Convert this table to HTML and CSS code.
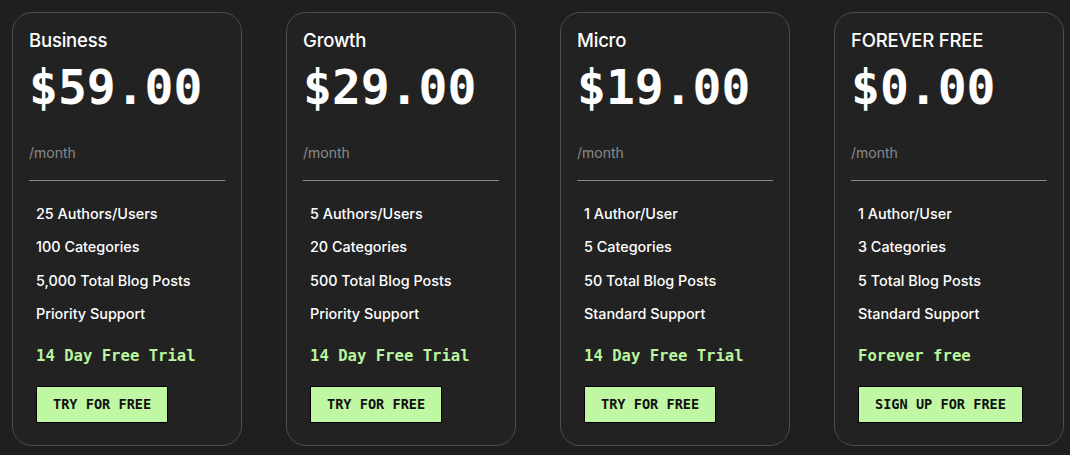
FILE: index.html
```html
<!DOCTYPE html>
<html>
<head>
<meta charset="utf-8">
<link rel="stylesheet" href="styles.css">
</head>
<body>
<div class="plans">
  <div class="card">
    <div class="name">Business</div>
    <div class="price">$59.00</div>
    <div class="period">/month</div>
    <ul class="features">
      <li>25 Authors/Users</li>
      <li>100 Categories</li>
      <li>5,000 Total Blog Posts</li>
      <li>Priority Support</li>
    </ul>
    <div class="trial">14 Day Free Trial</div>
    <a class="btn">TRY FOR FREE</a>
  </div>
  <div class="card">
    <div class="name">Growth</div>
    <div class="price">$29.00</div>
    <div class="period">/month</div>
    <ul class="features">
      <li>5 Authors/Users</li>
      <li>20 Categories</li>
      <li>500 Total Blog Posts</li>
      <li>Priority Support</li>
    </ul>
    <div class="trial">14 Day Free Trial</div>
    <a class="btn">TRY FOR FREE</a>
  </div>
  <div class="card">
    <div class="name">Micro</div>
    <div class="price">$19.00</div>
    <div class="period">/month</div>
    <ul class="features">
      <li>1 Author/User</li>
      <li>5 Categories</li>
      <li>50 Total Blog Posts</li>
      <li>Standard Support</li>
    </ul>
    <div class="trial">14 Day Free Trial</div>
    <a class="btn">TRY FOR FREE</a>
  </div>
  <div class="card">
    <div class="name">FOREVER FREE</div>
    <div class="price">$0.00</div>
    <div class="period">/month</div>
    <ul class="features">
      <li>1 Author/User</li>
      <li>3 Categories</li>
      <li>5 Total Blog Posts</li>
      <li>Standard Support</li>
    </ul>
    <div class="trial">Forever free</div>
    <a class="btn">SIGN UP FOR FREE</a>
  </div>
</div>
</body>
</html>
```
FILE: styles.css
```css
html, body {
  margin: 0;
  padding: 0;
  background: #1f1f1f;
}
body {
  font-family: Inter, "Noto Sans", sans-serif;
  color: #fff;
}
.plans {
  display: flex;
  gap: 44px;
  padding: 12px 6px 0 12px;
}
.card {
  box-sizing: border-box;
  width: 230px;
  height: 434px;
  border: 1.5px solid #4d4d4d;
  border-radius: 20px;
  background: #222;
  padding: 15px 16px 0 16px;
  display: flex;
  flex-direction: column;
  align-items: flex-start;
}
.name {
  font-size: 18.5px;
  font-weight: 500;
  line-height: 24px;
  letter-spacing: -0.2px;
}
.price {
  font-family: "DejaVu Sans Mono", monospace;
  font-weight: bold;
  font-size: 48px;
  line-height: 52px;
  margin-top: 9px;
  letter-spacing: 0;
}
.period {
  font-size: 14px;
  color: #8a8a8a;
  line-height: 18px;
  margin-top: 31px;
}
.features {
  list-style: none;
  margin: 18px 0 0 0;
  padding: 23px 0 0 7px;
  border-top: 1px solid #8a8a8a;
  align-self: stretch;
}
.features li {
  font-size: 14.4px;
  font-weight: 500;
  line-height: 20px;
  margin-bottom: 13.3px;
}
.trial {
  font-family: "DejaVu Sans Mono", monospace;
  font-weight: bold;
  font-size: 15.6px;
  color: #b9f59e;
  margin: 9px 0 0 7px;
  line-height: 20px;
}
.btn {
  display: block;
  margin: 20px 0 0 7px;
  background: #bff7a2;
  color: #111;
  border: 1px solid #000;
  font-family: "DejaVu Sans Mono", monospace;
  font-weight: bold;
  font-size: 13.6px;
  line-height: 35px;
  padding: 0 16px;
}
```
